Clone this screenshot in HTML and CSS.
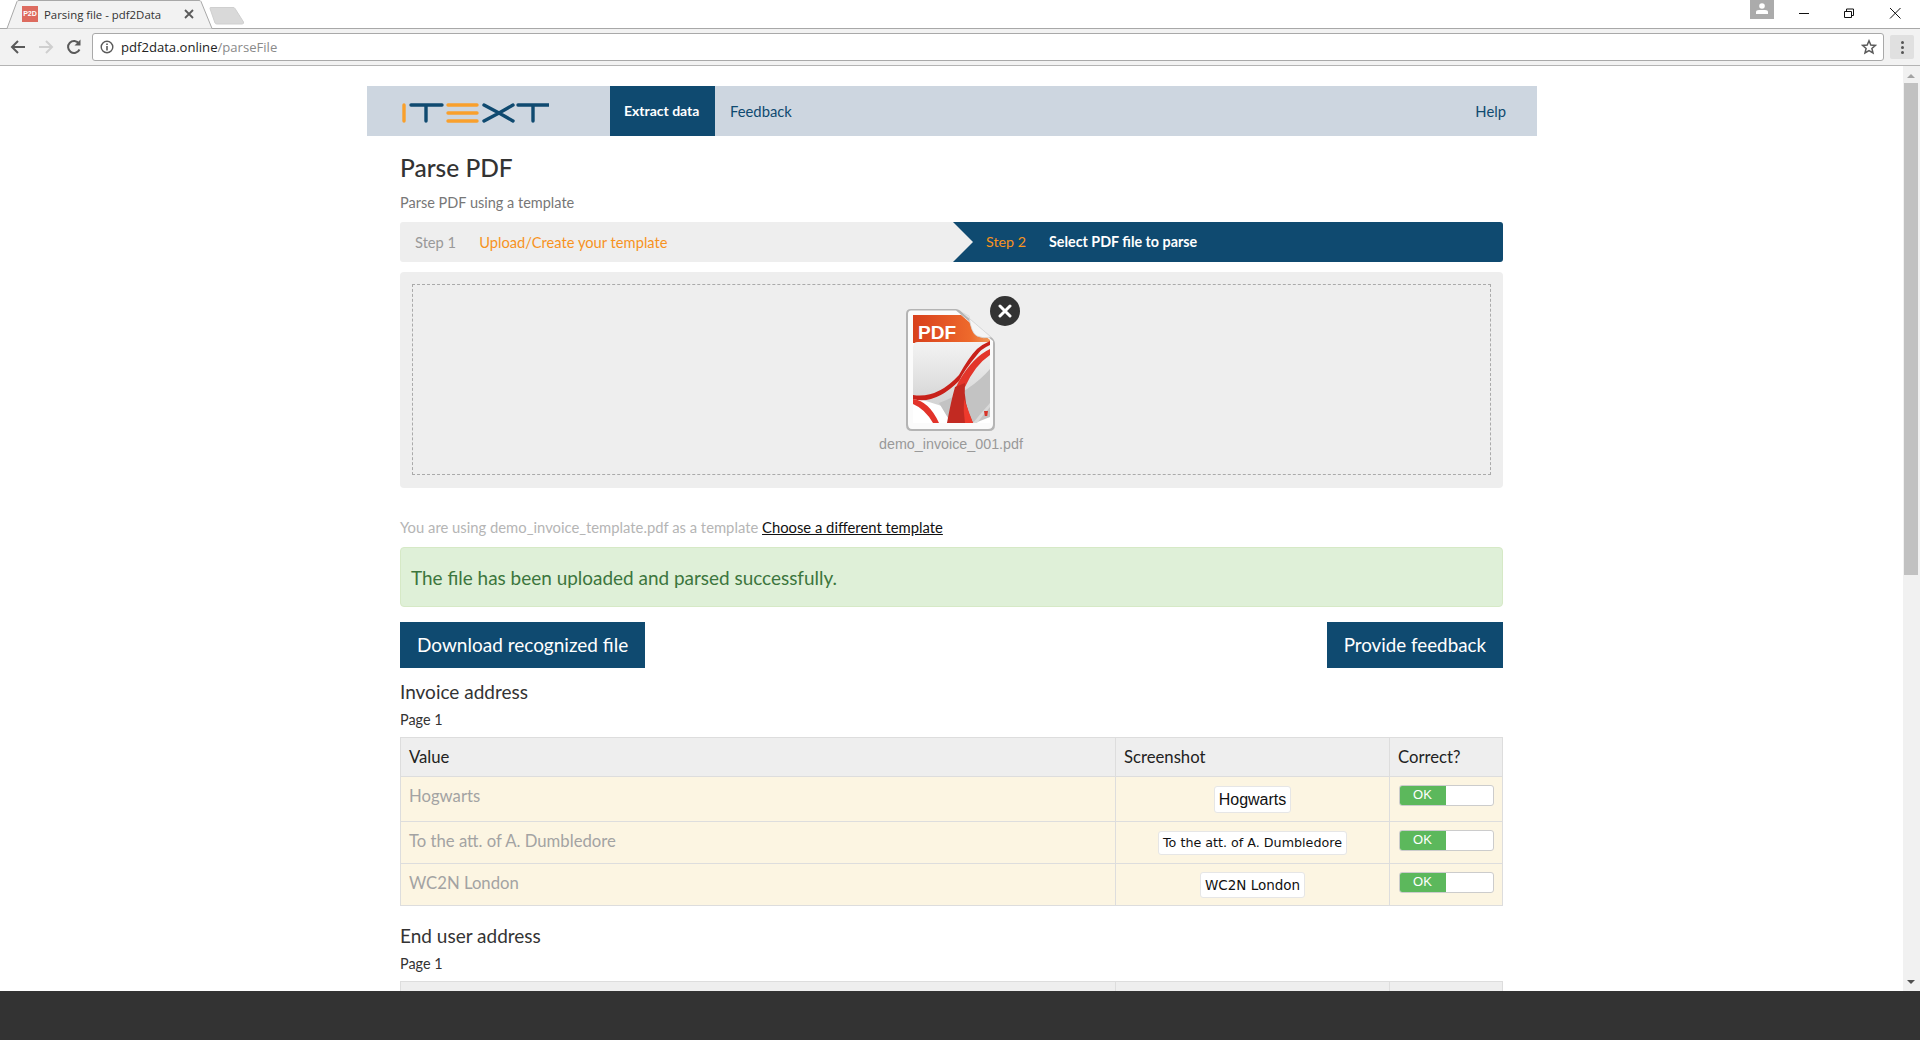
FILE: index.html
```html
<!DOCTYPE html>
<html lang="en">
<head>
    <meta charset="UTF-8">
    <meta name="viewport" content="width=device-width, initial-scale=1.0">
    <title>Parsing file - pdf2Data</title>
    <link rel="stylesheet" href="styles.css">
</head>
<body>

    <div class="tabstrip">
        <div class="tab">
            <svg class="tab-shape" width="214" height="29" viewBox="0 0 214 29"><path d="M0 28.5h6L16 1.5Q16.5 .5 18 .5H198Q199.500 .5 200 1.500L211 28.500h3" fill="#f2f2f2" stroke="#a8a8a8"/></svg>
            <span class="favicon">P2D</span>
            <span class="tab-title">Parsing file - pdf2Data</span>
            <svg class="tab-close" width="10" height="10" viewBox="0 0 10 10"><path d="M1 1l8 8M9 1l-8 8" stroke="#5a5a5a" stroke-width="1.800"/></svg>
        </div>
        <svg class="new-tab" width="36" height="18" viewBox="0 0 36 18"><path d="M1 1.500Q.5 .5 2 .5H24Q25.500 .5 26 1.500L34.500 15Q35 17 33 17H8Q6.500 17 6 16Z" fill="#d9d9d9" stroke="#cfcfcf"/></svg>
        <div class="window-controls">
            <span class="profile"><svg width="12" height="11" viewBox="0 0 12 11"><circle cx="6" cy="3" r="2.800" fill="#fff"/><path d="M0 11V9Q0 7 3 7H9Q12 7 12 9V11Z" fill="#fff"/></svg></span>
            <svg class="win-btn" width="46" height="28" viewBox="0 0 46 28"><path d="M19 13.500H29" stroke="#111"/></svg>
            <svg class="win-btn" width="46" height="28" viewBox="0 0 46 28"><path d="M18.500 11.500h7v6h-7zM20.500 11.500v-2.500h7v6.500h-2" fill="none" stroke="#111"/></svg>
            <svg class="win-btn" width="46" height="28" viewBox="0 0 46 28"><path d="M18 8l10.500 10.500M28.500 8L18 18.500" stroke="#111" fill="none"/></svg>
        </div>
    </div>

    <div class="toolbar">
        <svg class="tool-icon" width="18" height="18" viewBox="0 0 18 18"><path d="M16 9H3M9 3L3 9l6 6" fill="none" stroke="#5a5a5a" stroke-width="2"/></svg>
        <svg class="tool-icon" width="18" height="18" viewBox="0 0 18 18"><path d="M2 9H15M9 3l6 6-6 6" fill="none" stroke="#cfcfcf" stroke-width="2"/></svg>
        <svg class="tool-icon" width="18" height="18" viewBox="0 0 18 18"><path d="M14.500 11.500A6 6 0 1 1 14 5.500" fill="none" stroke="#5a5a5a" stroke-width="2"/><path d="M15.500 1.500V7.500H9.500Z" fill="#5a5a5a"/></svg>
        <div class="omnibox">
            <svg width="14" height="14" viewBox="0 0 14 14"><circle cx="7" cy="7" r="5.800" fill="none" stroke="#5a5a5a" stroke-width="1.400"/><path d="M6.200 6h1.600v4.500H6.200zM6.200 3.500h1.600v1.500H6.200z" fill="#5a5a5a"/></svg>
            <span class="url">pdf2data.online<span class="url-path">/parseFile</span></span>
            <svg class="star" width="16" height="16" viewBox="0 0 16 16"><path d="M8 1.800l1.800 4.200 4.600.4-3.500 3 1.100 4.500L8 11.500l-4 2.400 1.100-4.500-3.500-3 4.600-.4z" fill="none" stroke="#5a5a5a" stroke-width="1.500"/></svg>
        </div>
        <div class="menu-btn"><i></i><i></i><i></i></div>
    </div>

    <div class="viewport">
        <div class="page">
            <div class="site-header">
                <svg class="logo" width="148" height="22" viewBox="0 0 148 22">
                    <g fill="none" stroke-width="3.400" stroke-linecap="round">
                        <path d="M3 3V19" stroke="#f9a02c"/>
                        <path d="M10 3H41M25 3V19" stroke="#0f4a70"/>
                        <path d="M47 3H76M47 11H76M47 19H76" stroke="#f9a02c"/>
                        <path d="M83 19L98 11L83 3M112 3L98 11L112 19" stroke="#0f4a70"/>
                        <path d="M117 3H148M132 3V19" stroke="#0f4a70"/>
                    </g>
                </svg>
                <a class="nav-item active">Extract data</a>
                <a class="nav-item">Feedback</a>
                <a class="nav-item help">Help</a>
            </div>

            <div class="content">
                <h1>Parse PDF</h1>
                <p class="subtitle">Parse PDF using a template</p>

                <div class="steps">
                    <div class="step step-one">
                        <span class="step-no">Step 1</span>
                        <span class="step-text">Upload/Create your template</span>
                    </div>
                    <div class="step step-two">
                        <span class="step-no">Step 2</span>
                        <span class="step-text">Select PDF file to parse</span>
                    </div>
                </div>

                <div class="drop-panel">
                    <div class="drop-zone">
                        <div class="file-preview">
                            <svg class="pdf-icon" width="92" height="126" viewBox="0 0 92 126">
                                <defs>
                                    <linearGradient id="sheetFill" x1="0" y1="0" x2="0" y2="1">
                                        <stop offset="0" stop-color="#f3f3f3"/>
                                        <stop offset=".55" stop-color="#e2e2e2"/>
                                        <stop offset="1" stop-color="#d2d2d2"/>
                                    </linearGradient>
                                    <linearGradient id="bandFill" x1="0" y1="0" x2="1" y2="0">
                                        <stop offset="0" stop-color="#d8401c"/>
                                        <stop offset=".75" stop-color="#ee6a2c"/>
                                        <stop offset="1" stop-color="#f09a5a"/>
                                    </linearGradient>
                                    <clipPath id="sheetClip"><path d="M8 8H56L85 33V116H8Z"/></clipPath>
                                </defs>
                                <path d="M6 2H51Q53 2 55 3.500L86 30Q90 33 90 37V118Q90 124 84 124H7Q1 124 1 118V7Q1 2 6 2Z" fill="#b4b4b4"/>
                                <path d="M6 3.500H51L88 34V117Q88 122 83 122H7Q3 122 3 117V7Q3 3.500 6 3.500Z" fill="#fbfbfb"/>
                                <g clip-path="url(#sheetClip)">
                                    <rect x="8" y="8" width="77" height="108" fill="#fff"/>
                                    <rect x="8" y="8" width="77" height="28" fill="url(#bandFill)"/>
                                    <path d="M8 40Q8 35 13 35H85V92L40 100L8 90Z" fill="url(#sheetFill)"/>
                                    <path d="M34 96Q66 84 85 62V110L70 116H46Z" fill="#c3c3c3"/>
                                    <path d="M8 88Q32 92 54 68Q64 50 72 42Q78 37 85 34V38Q76 42 72 48Q60 62 54 74Q30 98 8 92Z" fill="#c8211a"/>
                                    <path d="M85 42Q68 50 54 74L50 82L60 80Q70 58 85 48Z" fill="#e3352a"/>
                                    <path d="M50 80L60 76Q58 96 68 116H42Q46 94 50 80Z" fill="#c22a22"/>
                                    <path d="M60 116Q58 104 59 92L68 116Z" fill="#ee3a2c"/>
                                    <path d="M8 92Q24 94 34 116H28Q20 102 8 97Z" fill="#e2332a"/>
                                    <path d="M68 116Q76 106 85 96V100Q78 108 72 116Z" fill="#d9d9d9"/>
                                    <path d="M79 104h4l-.800 5h-2.400z" fill="#d8352a"/>
                                </g>
                                <path d="M64 9Q66 26 72 29Q78 32 86 30L58 6Z" fill="#f5f5f5" stroke="#d5d5d5" stroke-width=".800"/>
                                <text x="13" y="32" class="pdf-label">PDF</text>
                            </svg>
                            <span class="remove-file"><svg width="14" height="14" viewBox="0 0 14 14"><path d="M2 2l10 10M12 2L2 12" stroke="#fff" stroke-width="3" stroke-linecap="round"/></svg></span>
                            <div class="file-name">demo_invoice_001.pdf</div>
                        </div>
                    </div>
                </div>

                <p class="template-note">You are using demo_invoice_template.pdf as a template <a class="template-link">Choose a different template</a></p>

                <div class="alert-success">The file has been uploaded and parsed successfully.</div>

                <div class="actions">
                    <a class="btn">Download recognized file</a>
                    <a class="btn">Provide feedback</a>
                </div>

                <h3 class="section-title">Invoice address</h3>
                <p class="page-no">Page 1</p>
                <table class="result-table">
                    <tr class="head-row"><th class="col-value">Value</th><th class="col-shot">Screenshot</th><th class="col-ok">Correct?</th></tr>
                    <tr class="row-a">
                        <td>Hogwarts</td>
                        <td class="shot-cell"><span class="shot shot-large">Hogwarts</span></td>
                        <td><div class="toggle"><span class="toggle-on">OK</span></div></td>
                    </tr>
                    <tr class="row-b">
                        <td>To the att. of A. Dumbledore</td>
                        <td class="shot-cell"><span class="shot shot-small">To the att. of A. Dumbledore</span></td>
                        <td><div class="toggle"><span class="toggle-on">OK</span></div></td>
                    </tr>
                    <tr class="row-b">
                        <td>WC2N London</td>
                        <td class="shot-cell"><span class="shot shot-mid">WC2N London</span></td>
                        <td><div class="toggle"><span class="toggle-on">OK</span></div></td>
                    </tr>
                </table>

                <h3 class="section-title second">End user address</h3>
                <p class="page-no">Page 1</p>
                <table class="result-table">
                    <tr class="head-row"><th class="col-value"></th><th class="col-shot"></th><th class="col-ok"></th></tr>
                </table>
            </div>
        </div>

        <div class="scrollbar">
            <span class="arrow-up"></span>
            <div class="thumb"></div>
            <span class="arrow-down"></span>
        </div>
    </div>

    <div class="bottom-bar"></div>

</body>
</html>
```

FILE: styles.css
```css
* {
    box-sizing: border-box;
}
html, body {
    margin: 0;
    height: 1040px;
    overflow: hidden;
}
body {
    display: flex;
    flex-direction: column;
    font-family: Lato, "Open Sans", sans-serif;
    color: #333;
    background-color: #fff;
}

/* browser window */
.tabstrip {
    height: 29px;
    display: flex;
    align-items: flex-start;
    border-bottom: 1px solid #a8a8a8;
    flex: none;
}
.tab {
    position: relative;
    width: 214px;
    height: 29px;
    margin-left: 1px;
    display: flex;
    align-items: center;
    padding: 0 0 1px 21px;
}
.tab-shape {
    position: absolute;
    left: 0;
    top: 0;
}
.favicon {
    position: relative;
    width: 16px;
    height: 16px;
    background-color: #dd6b5f;
    color: #fff;
    font: bold 7px "Liberation Sans", sans-serif;
    line-height: 16px;
    text-align: center;
}
.tab-title {
    position: relative;
    width: 140px;
    margin-left: 6px;
    font: 11.400px "Open Sans", sans-serif;
    color: #333;
    white-space: nowrap;
}
.tab-close {
    position: relative;
    margin-left: 0;
}
.new-tab {
    margin: 7px 0 0 -6px;
}
.window-controls {
    margin-left: auto;
    margin-right: 2px;
    display: flex;
    align-items: flex-start;
}
.profile {
    width: 24px;
    height: 19px;
    margin-right: 6px;
    background-color: #ababab;
    display: flex;
    justify-content: center;
    padding-top: 3px;
}
.toolbar {
    height: 37px;
    flex: none;
    display: flex;
    align-items: center;
    padding-left: 9px;
    background-color: #f2f2f2;
    border-bottom: 1px solid #b4b4b4;
}
.tool-icon {
    margin-right: 10px;
}
.omnibox {
    width: 1792px;
    height: 28px;
    margin-left: -1px;
    display: flex;
    align-items: center;
    gap: 7px;
    padding: 0 6px 0 7px;
    background-color: #fff;
    border: 1px solid #a9a9a9;
    border-radius: 3px;
}
.url {
    font: 13.100px "Open Sans", sans-serif;
    color: #222;
}
.url-path {
    color: #8a8a8a;
}
.star {
    margin-left: auto;
}
.menu-btn {
    width: 24px;
    height: 24px;
    margin-left: 6px;
    background-color: #e0e0e0;
    border-radius: 2px;
    display: flex;
    flex-direction: column;
    align-items: center;
    justify-content: center;
    gap: 2px;
}
.menu-btn i {
    width: 3px;
    height: 3px;
    border-radius: 50%;
    background-color: #555;
}
.viewport {
    flex: 1;
    min-height: 0;
    display: flex;
}
.scrollbar {
    position: relative;
    width: 17px;
    flex: none;
    background-color: #f1f1f1;
}
.thumb {
    position: absolute;
    left: 1px;
    top: 17px;
    width: 14px;
    height: 492px;
    background-color: #c1c1c1;
}
.arrow-up, .arrow-down {
    position: absolute;
    left: 4px;
    width: 0;
    height: 0;
    border-left: 4px solid transparent;
    border-right: 4px solid transparent;
}
.arrow-up {
    top: 8px;
    border-bottom: 4px solid #a3a3a3;
}
.arrow-down {
    bottom: 7px;
    border-top: 4px solid #505050;
}
.bottom-bar {
    height: 49px;
    flex: none;
    background-color: #333;
}

/* page */
.page {
    flex: 1;
    min-width: 0;
    overflow: hidden;
    padding: 20px 0 0 367px;
}
.site-header {
    width: 1170px;
    height: 50px;
    display: flex;
    align-items: stretch;
    background-color: #cdd6e0;
    padding-right: 31px;
}
.logo {
    flex: none;
    margin: 16px 61px 0 34px;
}
.nav-item {
    display: flex;
    align-items: center;
    padding: 0 15px 1px;
    font-size: 14.800px;
    color: #0f4a70;
    white-space: nowrap;
}
.nav-item.active {
    width: 105px;
    padding-left: 14px;
    background-color: #0f4a70;
    color: #fff;
    font-size: 14px;
    font-weight: 700;
}
.nav-item.help {
    margin-left: auto;
    padding: 0 0 1px;
}
.content {
    width: 1103px;
    margin-left: 33px;
}
h1 {
    margin: 17px 0 0;
    font-size: 24.500px;
    line-height: 30px;
    font-weight: 500;
    color: #333;
}
.subtitle {
    margin: 10px 0 0;
    font-size: 14.500px;
    line-height: 20px;
    color: #777;
}
.steps {
    display: flex;
    height: 40px;
    margin-top: 9px;
    font-size: 14.700px;
    line-height: 40px;
    border-radius: 3px;
    overflow: hidden;
    background-color: #eee;
}
.step {
    display: flex;
    align-items: center;
    padding-bottom: 1px;
}
.step-one {
    width: 553px;
    padding-left: 15px;
}
.step-two {
    flex: 1;
    position: relative;
    padding-left: 33px;
    background-color: #0f4a70;
    color: #fff;
    font-weight: 700;
    font-size: 14.300px;
}
.step-two::before {
    content: "";
    position: absolute;
    left: 0;
    top: 0;
    border-left: 20px solid #eee;
    border-top: 20px solid transparent;
    border-bottom: 20px solid transparent;
}
.step-no {
    margin-right: 23px;
    color: #999;
}
.step-text {
    color: #f7931e;
}
.step-two .step-no {
    margin-right: 23px;
    color: #f7931e;
    font-weight: 400;
}
.step-two .step-text {
    color: #fff;
}
.drop-panel {
    height: 216px;
    margin-top: 10px;
    padding: 12px;
    background-color: #eee;
    border-radius: 4px;
}
.drop-zone {
    height: 191px;
    display: flex;
    justify-content: center;
    padding-top: 22px;
    border: 1px dashed #aaa;
}
.file-preview {
    position: relative;
    width: 146px;
    margin-left: -1px;
    text-align: center;
}
.pdf-icon {
    display: block;
    margin: 0 auto;
}
.pdf-label {
    font: bold 19px "Liberation Sans", sans-serif;
    fill: #fff;
}
.remove-file {
    position: absolute;
    right: 4px;
    top: -11px;
    width: 30px;
    height: 30px;
    border-radius: 50%;
    background-color: #333;
    display: flex;
    align-items: center;
    justify-content: center;
}
.file-name {
    margin-top: 3px;
    font: 14.300px "Liberation Sans", sans-serif;
    color: #999;
    white-space: nowrap;
}
.template-note {
    margin: 29px 0 0;
    font-size: 14.800px;
    line-height: 20px;
    color: #b5b5b5;
}
.template-link {
    color: #111;
    text-decoration: underline;
}
.alert-success {
    height: 60px;
    margin-top: 10px;
    padding: 0 10px;
    display: flex;
    align-items: center;
    font-size: 18.950px;
    color: #3c763d;
    background-color: #dff0d8;
    border: 1px solid #d6e9c6;
    border-radius: 4px;
}
.actions {
    display: flex;
    justify-content: space-between;
    margin-top: 15px;
}
.btn {
    height: 46px;
    display: flex;
    align-items: center;
    padding: 0 17px 2px;
    font-size: 19px;
    color: #fff;
    background-color: #0f4a70;
}
.btn + .btn {
    font-size: 18.800px;
}
.section-title {
    margin: 13px 0 0;
    font-size: 19px;
    line-height: 22px;
    font-weight: 400;
    color: #333;
}
.section-title.second {
    margin-top: 19px;
}
.page-no {
    margin: 8px 0 0;
    font-size: 14.400px;
    line-height: 18px;
    color: #333;
}
.result-table {
    width: 1103px;
    margin-top: 8px;
    border-collapse: collapse;
    table-layout: fixed;
    font-size: 16.700px;
}
.result-table th, .result-table td {
    padding: 0 8px;
    border: 1px solid #ddd;
    text-align: left;
    font-weight: 400;
}
.head-row th {
    height: 39px;
    background-color: #eee;
    color: #222;
}
.col-value {
    width: 715px;
}
.col-shot {
    width: 274px;
}
.result-table td {
    background-color: #fcf5e2;
    color: #a3a3a3;
}
.row-a td {
    height: 45px;
    padding-bottom: 7px;
}
.row-b td {
    height: 42px;
    padding-bottom: 4px;
}
.result-table td.shot-cell {
    padding-bottom: 0;
    text-align: center;
}
.shot {
    display: inline-block;
    padding: 0 4px;
    background-color: #fff;
    border: 1px solid #e6e6e6;
    border-radius: 3px;
    color: #111;
    vertical-align: middle;
}
.shot-large {
    font: 16px/25px "Liberation Sans", sans-serif;
}
.shot-small {
    font: 12.700px/22px "DejaVu Sans", sans-serif;
}
.shot-mid {
    font: 13.500px/24px "DejaVu Sans", sans-serif;
}
.toggle {
    width: 95px;
    height: 21px;
    margin-left: 1px;
    background-color: #fff;
    border: 1px solid #ccc;
    border-radius: 3px;
    overflow: hidden;
}
.toggle-on {
    display: block;
    width: 47px;
    height: 21px;
    margin: -1px 0 0 -1px;
    background-color: #5cb85c;
    color: #fff;
    font: 13px/20px "Liberation Sans", sans-serif;
    text-align: center;
}
```
